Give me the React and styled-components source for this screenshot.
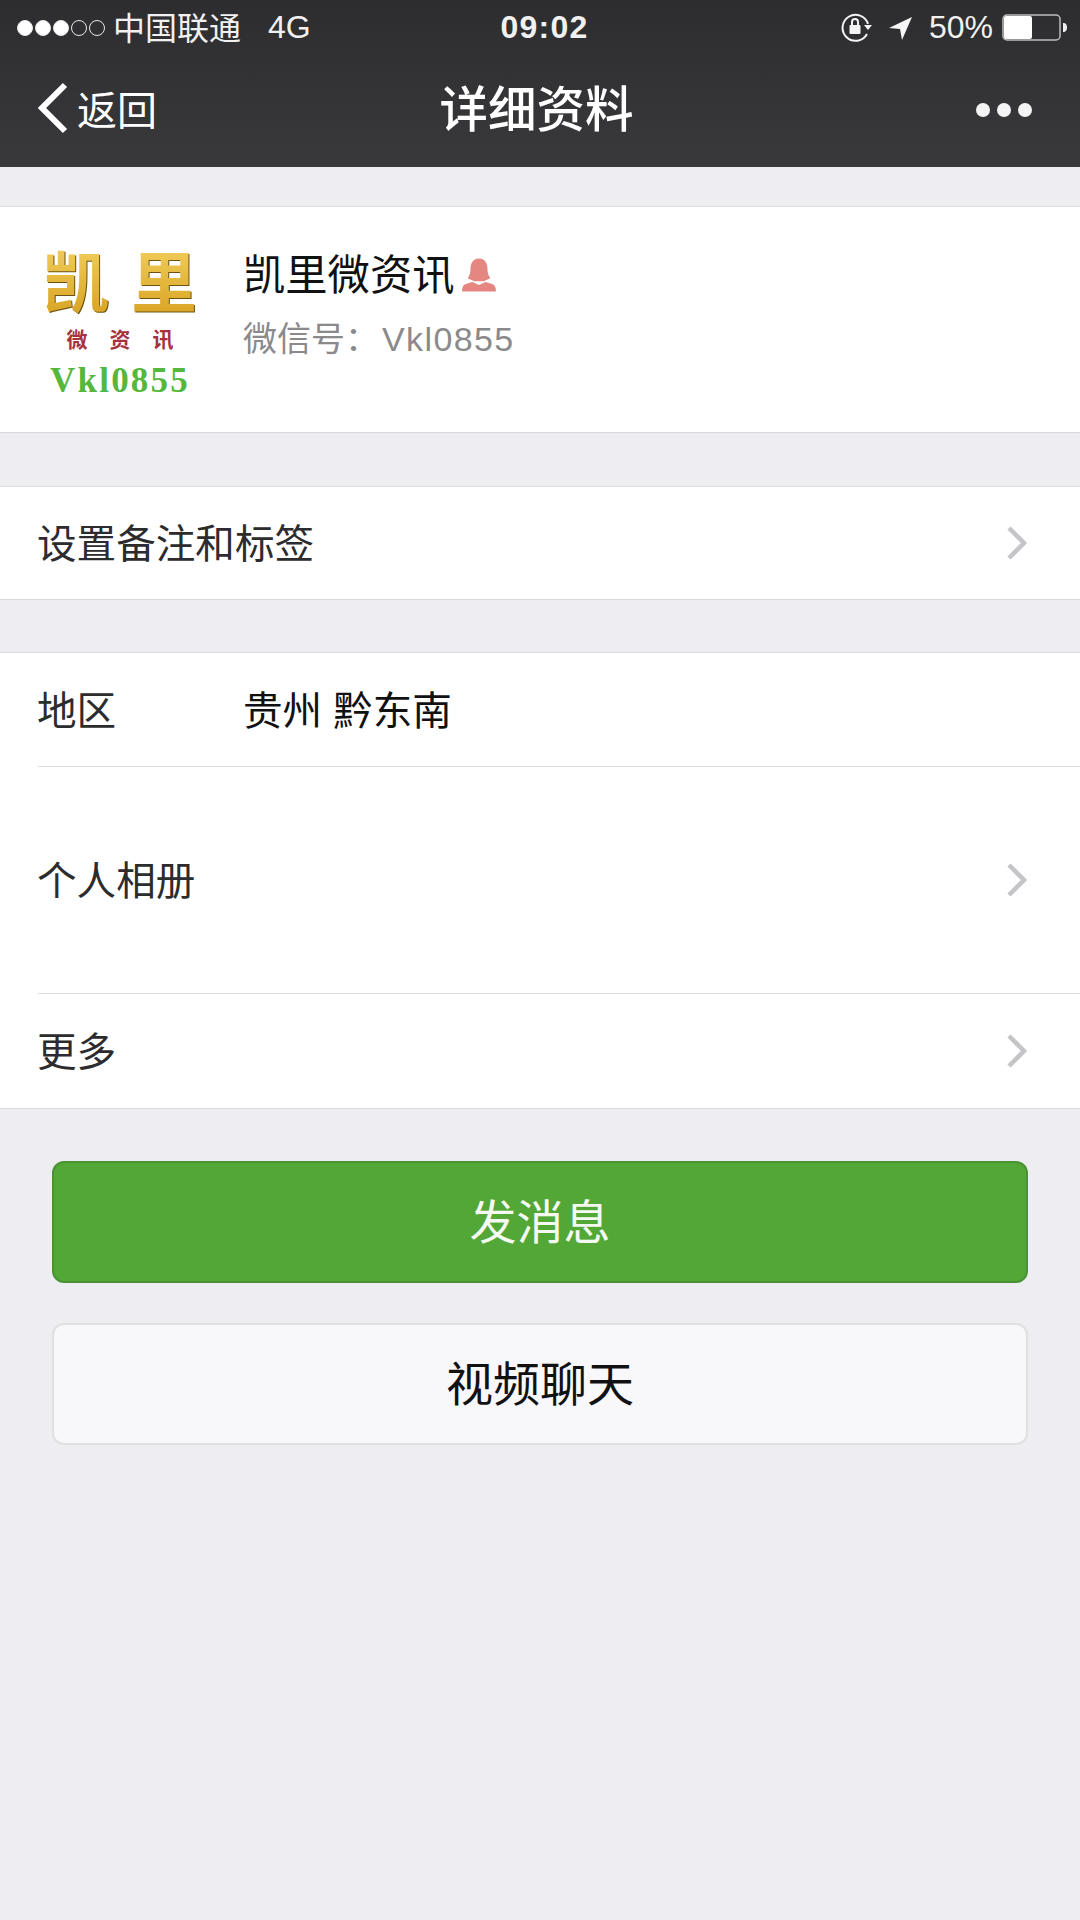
import React from 'react';
import styled, { createGlobalStyle } from 'styled-components';

const FONT = '"Liberation Sans", "Noto Sans CJK SC", sans-serif';

const GlobalStyle = createGlobalStyle`
  html, body {
    margin: 0;
    padding: 0;
    background: #eeedf1;
  }
  * {
    box-sizing: border-box;
  }
`;

const Page = styled.div`
  width: 1080px;
  height: 1920px;
  overflow: hidden;
  background: #eeedf1;
  font-family: ${FONT};
`;

const Header = styled.header`
  height: 167px;
  background: linear-gradient(#2d2c2f, #39383b);
  color: #fff;
`;

const StatusBar = styled.div`
  height: 55px;
  padding: 0 12px 0 17px;
  display: grid;
  grid-template-columns: 1fr auto 1fr;
  align-items: center;
  font-size: 32px;
  color: #f1f1f1;
`;

const StatusLeft = styled.div`
  display: flex;
  align-items: center;
`;

const StatusRight = styled.div`
  display: flex;
  align-items: center;
  justify-content: flex-end;
`;

const Signal = styled.div`
  display: flex;
  gap: 2px;
  margin-right: 8px;
`;

const SignalDot = styled.span`
  width: 16px;
  height: 16px;
  border-radius: 50%;
  border: 1px solid #e8e8e8;
  background: ${(p) => (p.$on ? '#fff' : 'transparent')};
`;

const Carrier = styled.span`
  width: 155px;
  margin-bottom: 4px;
`;

const Clock = styled.span`
  font-size: 32px;
  font-weight: 700;
  letter-spacing: 1.200px;
  margin-left: 4px;
`;

const NavBar = styled.div`
  height: 112px;
  padding: 0 48px 10px 37px;
  display: grid;
  grid-template-columns: 1fr auto 1fr;
  align-items: center;
`;

const BackLink = styled.div`
  margin-top: 4px;
  display: flex;
  align-items: center;
  gap: 8px;
  font-size: 40px;
  font-weight: 400;
`;

const NavTitle = styled.h1`
  margin: 0 0 0 4px;
  font-size: 48.500px;
  font-weight: 500;
`;

const MoreDots = styled.div`
  margin-top: 8px;
  display: flex;
  justify-content: flex-end;
  gap: 7px;
`;

const MoreDot = styled.span`
  width: 14px;
  height: 14px;
  border-radius: 50%;
  background: #f4f4f4;
`;

const Group = styled.section`
  margin-top: ${(p) => p.$top}px;
  background: #fff;
  border-top: 1px solid #dcdcde;
  border-bottom: 1px solid #d9d9db;
`;

const Profile = styled.div`
  height: 225px;
  padding: 0 0 0 38px;
  display: flex;
  align-items: center;
`;

const Avatar = styled.div`
  width: 164px;
  height: 165px;
  margin-right: 41px;
  padding-top: 6px;
  display: flex;
  flex-direction: column;
  align-items: center;
  font-family: "Noto Sans CJK SC", sans-serif;
`;

const AvatarTitle = styled.div`
  display: flex;
  gap: 22px;
  font-size: 66px;
  line-height: 70px;
  font-weight: 700;
  color: #dcae2e;
  background: linear-gradient(#f2cf5c, #d9a526);
  -webkit-background-clip: text;
  background-clip: text;
  -webkit-text-fill-color: transparent;
  filter: drop-shadow(1px 1px 0 #6e5412);
`;

const AvatarSub = styled.div`
  margin-top: 12px;
  display: flex;
  gap: 22px;
  font-size: 21px;
  line-height: 26px;
  font-weight: 700;
  color: #a5323d;
`;

const AvatarId = styled.div`
  margin-top: 14px;
  font-family: "Liberation Serif", serif;
  font-size: 35px;
  line-height: 32px;
  font-weight: 700;
  letter-spacing: 2.200px;
  white-space: nowrap;
  color: #55b83d;
`;

const ProfileText = styled.div`
  padding-bottom: 30px;
`;

const NameLine = styled.div`
  display: flex;
  align-items: center;
  gap: 7px;
  font-size: 42.300px;
  line-height: 60px;
  color: #111;
`;

const WechatId = styled.div`
  margin-top: 8px;
  font-size: 34px;
  line-height: 50px;
  color: #8a8a8c;
`;

const WechatValue = styled.span`
  margin-left: 3px;
  letter-spacing: 1.400px;
`;

const Row = styled.div`
  height: ${(p) => p.$height}px;
  padding: 0 52px 0 37px;
  display: flex;
  align-items: center;
  justify-content: space-between;
  font-size: 39.600px;
  color: #2c2c2e;
`;

const RowLabel = styled.span`
  margin-bottom: 5px;
`;

const RowGap = styled.div`
  height: 1px;
  margin-left: 38px;
  background: #dddddf;
`;

const RegionLabel = styled(RowLabel)`
  width: 206px;
`;

const RegionValue = styled(RowLabel)`
  flex: 1;
  color: #111;
`;

const Actions = styled.div`
  padding: 52px 52px 0;
  display: flex;
  flex-direction: column;
  gap: 40px;
`;

const ActionButton = styled.button`
  height: 122px;
  padding: 0 0 8px;
  border-radius: 12px;
  font-family: ${FONT};
  font-size: 47px;
  color: ${(p) => (p.$primary ? '#f4f9f1' : '#111')};
  background: ${(p) => (p.$primary ? '#52a737' : '#f8f7fa')};
  border: 2px solid ${(p) => (p.$primary ? '#4a9334' : '#e0dfe2')};
`;

const Chevron = () => (
  <svg width="22" height="36" viewBox="0 0 22 36">
    <path d="M3 3l15 15L3 33" fill="none" stroke="#c5c5c8" strokeWidth="4.500" />
  </svg>
);

const BackIcon = () => (
  <svg width="32" height="52" viewBox="0 0 32 52">
    <path d="M28 3L5 26l23 23" fill="none" stroke="#fff" strokeWidth="6" />
  </svg>
);

const LockIcon = () => (
  <svg width="32" height="30" viewBox="0 0 32 30" style={{ marginRight: 15 }}>
    <path d="M26 21a13 13 0 1 1 1-10" fill="none" stroke="#f4f4f4" strokeWidth="2" />
    <path d="M23 12h8l-4 5z" fill="#f4f4f4" />
    <rect x="8.500" y="12" width="11" height="9" rx="1" fill="#f4f4f4" />
    <path d="M11 12V9a3 3 0 0 1 6 0v3" fill="none" stroke="#f4f4f4" strokeWidth="2" />
  </svg>
);

const LocationIcon = () => (
  <svg width="24" height="24" viewBox="0 0 24 24" style={{ marginRight: 17 }}>
    <path d="M1 12L24 1 14 24l-2-11z" fill="#f6f6f6" />
  </svg>
);

const Battery = () => (
  <svg width="66" height="28" viewBox="0 0 66 28" style={{ marginLeft: 9 }}>
    <rect x="1" y="1" width="57" height="25" rx="4" fill="none" stroke="#bdbdbd" strokeWidth="1.500" />
    <rect x="2" y="2" width="28" height="23" rx="2" fill="#fff" />
    <path d="M61 9c3 0 4 2 4 4.500S64 18 61 18z" fill="#eee" />
  </svg>
);

const FemaleIcon = () => (
  <svg width="34" height="35" viewBox="0 0 36 36">
    <path
      d="M18 0c6 0 9 5 9 11 0 4 1 7 3 10l-7 3H13l-7-3c2-3 3-6 3-10C9 5 12 0 18 0z"
      fill="#e58681"
    />
    <path d="M11 25l7 3 7-3 7 2c3 1 4 4 4 8H0c0-4 1-7 4-8z" fill="#e58681" />
  </svg>
);

const App = () => (
  <Page>
    <GlobalStyle />
    <Header>
      <StatusBar>
        <StatusLeft>
          <Signal>
            {[true, true, true, false, false].map((on, i) => (
              <SignalDot key={i} $on={on} />
            ))}
          </Signal>
          <Carrier>中国联通</Carrier>
          <span>4G</span>
        </StatusLeft>
        <Clock>09:02</Clock>
        <StatusRight>
          <LockIcon />
          <LocationIcon />
          <span>50%</span>
          <Battery />
        </StatusRight>
      </StatusBar>
      <NavBar>
        <BackLink>
          <BackIcon />
          返回
        </BackLink>
        <NavTitle>详细资料</NavTitle>
        <MoreDots>
          <MoreDot />
          <MoreDot />
          <MoreDot />
        </MoreDots>
      </NavBar>
    </Header>

    <Group $top={39}>
      <Profile>
        <Avatar>
          <AvatarTitle>
            <span>凯</span>
            <span>里</span>
          </AvatarTitle>
          <AvatarSub>
            <span>微</span>
            <span>资</span>
            <span>讯</span>
          </AvatarSub>
          <AvatarId>Vkl0855</AvatarId>
        </Avatar>
        <ProfileText>
          <NameLine>
            凯里微资讯
            <FemaleIcon />
          </NameLine>
          <WechatId>
            微信号：<WechatValue>Vkl0855</WechatValue>
          </WechatId>
        </ProfileText>
      </Profile>
    </Group>

    <Group $top={53}>
      <Row $height={112}>
        <RowLabel>设置备注和标签</RowLabel>
        <Chevron />
      </Row>
    </Group>

    <Group $top={52}>
      <Row $height={113}>
        <RegionLabel>地区</RegionLabel>
        <RegionValue>贵州 黔东南</RegionValue>
      </Row>
      <RowGap />
      <Row $height={226}>
        <RowLabel>个人相册</RowLabel>
        <Chevron />
      </Row>
      <RowGap />
      <Row $height={114}>
        <RowLabel>更多</RowLabel>
        <Chevron />
      </Row>
    </Group>

    <Actions>
      <ActionButton $primary>发消息</ActionButton>
      <ActionButton>视频聊天</ActionButton>
    </Actions>
  </Page>
);

export default App;
